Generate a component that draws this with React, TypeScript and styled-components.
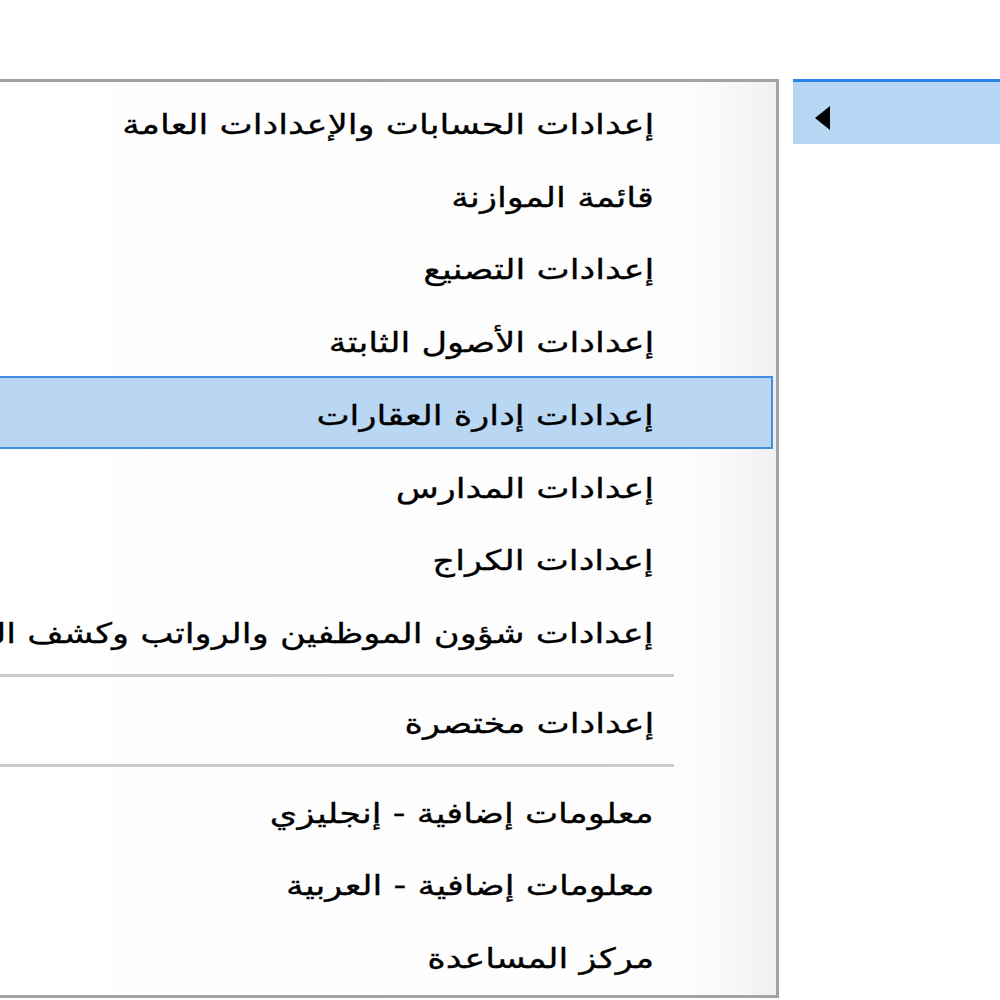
import styled, { createGlobalStyle } from 'styled-components';

const GlobalStyle = createGlobalStyle`
  html, body {
    margin: 0;
    padding: 0;
    background: #ffffff;
    overflow: hidden;
  }
`;

const Screen = styled.div`
  width: 1000px;
  height: 1000px;
  overflow: hidden;
  display: flex;
  flex-direction: row;
  justify-content: flex-end;
  align-items: flex-start;
  gap: 14px;
  padding-top: 79px;
  box-sizing: border-box;
  font-family: 'DejaVu Sans', Tahoma, sans-serif;
`;

const Menu = styled.div`
  flex: 0 0 1100px;
  box-sizing: border-box;
  direction: rtl;
  border-top: 3px solid #a3a3a3;
  border-right: 3px solid #a3a3a3;
  border-bottom: 3px solid #a3a3a3;
  padding: 3px 0;
  background: linear-gradient(
    to left,
    #f0f0f0 0px,
    #f7f7f7 40px,
    #fdfdfd 90px,
    #ffffff 100%
  );
`;

const MenuRow = styled.div<{ $selected?: boolean }>`
  height: 72.75px;
  box-sizing: border-box;
  margin-right: 3px;
  padding-right: 117px;
  display: flex;
  align-items: center;
  border: 2px solid ${({ $selected }) => ($selected ? '#3f8fe0' : 'transparent')};
  background: ${({ $selected }) => ($selected ? '#b9d7f3' : 'transparent')};
`;

// the original face (Tahoma) runs about a quarter wider than DejaVu's Arabic
const RowLabel = styled.span`
  display: inline-block;
  font-size: 28px;
  color: #000000;
  white-space: nowrap;
  padding-top: 6px;
  transform: scaleX(1.26);
  transform-origin: right center;
  -webkit-text-stroke: 0.3px #000000;
`;

const Separator = styled.div`
  height: 17px;
  display: flex;
  align-items: center;
  margin-right: 102px;

  &::after {
    content: '';
    flex: 1;
    height: 3px;
    background: #cbcbcb;
  }
`;

const ParentItem = styled.div`
  flex: 0 0 207px;
  height: 65px;
  box-sizing: border-box;
  border-top: 3px solid #2a86e6;
  background: #b7d6f3;
  display: flex;
  align-items: center;
  padding-left: 22px;
`;

const Arrow = styled.span`
  width: 0;
  height: 0;
  border-top: 12px solid transparent;
  border-bottom: 12px solid transparent;
  border-right: 15px solid #000000;
  margin-top: 9px;
`;

type Entry = { label: string; selected?: boolean } | 'sep';

const entries: Entry[] = [
  { label: 'إعدادات الحسابات والإعدادات العامة' },
  { label: 'قائمة الموازنة' },
  { label: 'إعدادات التصنيع' },
  { label: 'إعدادات الأصول الثابتة' },
  { label: 'إعدادات إدارة العقارات', selected: true },
  { label: 'إعدادات المدارس' },
  { label: 'إعدادات الكراج' },
  { label: 'إعدادات شؤون الموظفين والرواتب وكشف الدوام' },
  'sep',
  { label: 'إعدادات مختصرة' },
  'sep',
  { label: 'معلومات إضافية - إنجليزي' },
  { label: 'معلومات إضافية - العربية' },
  { label: 'مركز المساعدة' },
];

const App = () => {
  return (
    <>
      <GlobalStyle />
      <Screen>
        <Menu>
          {entries.map((entry, i) =>
            entry === 'sep' ? (
              <Separator key={i} />
            ) : (
              <MenuRow key={i} $selected={entry.selected}>
                <RowLabel>{entry.label}</RowLabel>
              </MenuRow>
            )
          )}
        </Menu>
        <ParentItem>
          <Arrow />
        </ParentItem>
      </Screen>
    </>
  );
};

export default App;
